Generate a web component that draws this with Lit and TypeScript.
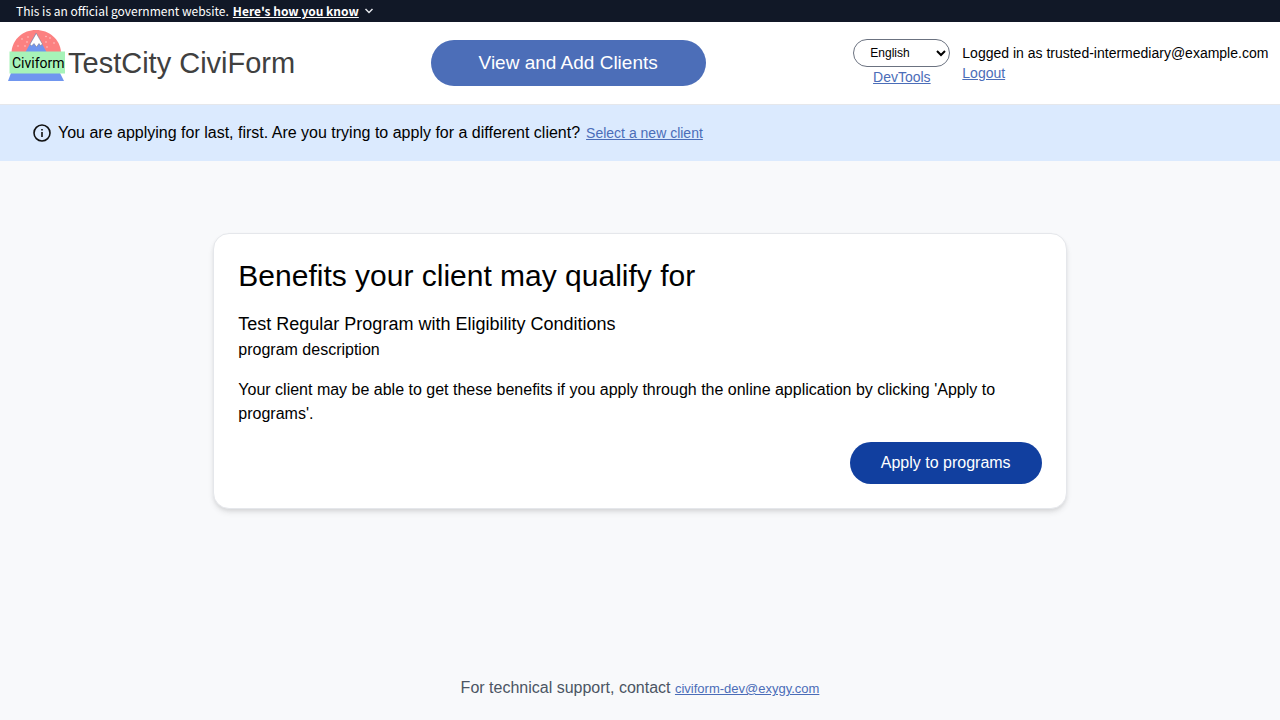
import { LitElement, html, css } from "lit";
import { customElement } from "lit/decorators.js";

@customElement("civiform-logo")
class CiviformLogo extends LitElement {
  static styles = css`
    :host {
      display: block;
      width: 60px;
      height: 52px;
      flex: none;
    }
    svg {
      display: block;
    }
    .word {
      font-family: Roboto, "Liberation Sans", sans-serif;
      font-size: 14px;
    }
  `;

  render() {
    return html`
      <svg width="60" height="52" viewBox="0 0 60 52" role="img" aria-label="Civiform logo">
        <path d="M3.500 22C4.500 9 15 0 28 0S52 9 53 22Z" fill="#fc8181" />
        <path d="M17.500 22L28 3L38.500 22Z" fill="#7096ef" />
        <path d="M28.300 3.300L34.300 13.800L32.800 16L31 13.500L28.500 17L26 13.500L23.500 16L22 14.200Z" fill="#fff" stroke="#77717c" stroke-width=".5" />
        <g fill="#fed7d7">
          <circle cx="20" cy="7" r=".7" /><circle cx="14" cy="9" r=".7" />
          <circle cx="19" cy="12" r=".7" /><circle cx="10" cy="16" r=".7" />
          <circle cx="17" cy="16" r=".7" /><circle cx="38" cy="6.500" r=".7" />
          <circle cx="42" cy="8" r=".7" /><circle cx="38" cy="12" r=".7" />
          <circle cx="46" cy="13" r=".7" /><circle cx="39" cy="17" r=".7" />
        </g>
        <path d="M3 43H52L56 51H0Z" fill="#7096ef" />
        <rect x="1.500" y="21.500" width="55.500" height="22" fill="#a7f3b8" />
        <text class="word" x="4" y="38">Civiform</text>
      </svg>
    `;
  }
}

@customElement("app-root")
class AppRoot extends LitElement {
  static styles = css`
    :host {
      display: flex;
      flex-direction: column;
      min-height: 100vh;
      background: #f8f9fb;
      color: #000;
      font-family: "Liberation Sans", Arial, sans-serif;
      font-size: 16px;
      line-height: 24px;
    }
    * {
      box-sizing: border-box;
    }
    h1,
    h2,
    p {
      margin: 0;
      font-weight: 400;
    }
    button {
      border: 0;
      border-radius: 24px;
      color: #fff;
      font-family: inherit;
      cursor: pointer;
    }
    a {
      color: #4b6db8;
      font-size: 14px;
    }
    .gov {
      display: flex;
      align-items: center;
      gap: 4px;
      height: 22px;
      padding: 0 16px;
      background: #111827;
      color: #fff;
      font-family: "Noto Sans CJK JP", sans-serif;
      font-size: 12px;
      line-height: 16px;
    }
    .know {
      display: flex;
      align-items: center;
      gap: 5px;
      padding: 0;
      background: none;
      border-radius: 0;
      font-size: 12px;
      line-height: 16px;
      font-weight: 700;
    }
    .know span {
      text-decoration: underline;
    }
    .top {
      display: grid;
      grid-template-columns: repeat(3, minmax(0, 1fr));
      height: 83px;
      padding-top: 8px;
      background: #fff;
      border-bottom: 1px solid #e5e7eb;
    }
    .third {
      display: flex;
      align-items: flex-start;
    }
    .brand {
      padding-left: 8px;
      font-size: 29px;
      line-height: 66px;
      color: #404040;
      white-space: nowrap;
    }
    .mid {
      padding: 10px 4px;
    }
    .clients {
      width: 275px;
      height: 46px;
      background: #4c6eb8;
      font-size: 19px;
    }
    .account {
      gap: 12px;
      padding-top: 9px;
      font-size: 14px;
      line-height: 20px;
      white-space: nowrap;
    }
    .lang {
      display: flex;
      flex-direction: column;
      align-items: center;
    }
    select {
      width: 97px;
      height: 28px;
      padding: 0 0 0 12px;
      border: 1px solid #6b7280;
      border-radius: 14px;
      background: #fff;
      color: #000;
      font-family: inherit;
      font-size: 12px;
    }
    .who {
      display: flex;
      flex-direction: column;
      align-items: flex-start;
      padding-top: 4px;
    }
    .notice {
      display: flex;
      align-items: center;
      gap: 6px;
      padding: 16px 32px;
      background: #dbeafe;
    }
    main {
      flex: 1;
      padding: 72px 0;
    }
    .card {
      width: 66.67%;
      margin: 0 auto;
      padding: 24px;
      background: #fff;
      border: 1px solid #e5e7eb;
      border-radius: 16px;
      box-shadow: 0 4px 6px -1px rgb(0 0 0 / 0.1), 0 2px 4px -1px rgb(0 0 0 / 0.08);
    }
    h1 {
      font-size: 30px;
      line-height: 36px;
      margin-bottom: 16px;
    }
    h2 {
      font-size: 18px;
      line-height: 28px;
    }
    .explain {
      margin: 16px 0;
    }
    .actions {
      display: flex;
      justify-content: flex-end;
    }
    .apply {
      width: 192px;
      height: 42px;
      background: #113f9f;
      font-size: 16px;
    }
    footer {
      padding: 19px 0;
      text-align: center;
      color: #4b5563;
    }
    footer a {
      font-size: 13px;
    }
  `;

  render() {
    return html`
      <div class="gov">
        <span>This is an official government website.</span>
        <button class="know" type="button">
          <span>Here's how you know</span>
          <svg width="10" height="6" viewBox="0 0 10 6" fill="none" stroke="#e5e7eb" stroke-width="1.500" aria-hidden="true">
            <path d="M1.500 1L5 4.500L8.500 1" />
          </svg>
        </button>
      </div>
      <header class="top">
        <div class="third brand">
          <civiform-logo></civiform-logo>
          <span>TestCity CiviForm</span>
        </div>
        <div class="third mid">
          <button class="clients" type="button">View and Add Clients</button>
        </div>
        <div class="third account">
          <div class="lang">
            <select aria-label="Language">
              <option>English</option>
            </select>
            <a href="#devtools">DevTools</a>
          </div>
          <div class="who">
            <span>Logged in as trusted-intermediary@example.com</span>
            <a href="#logout">Logout</a>
          </div>
        </div>
      </header>
      <div class="notice">
        <svg width="20" height="20" viewBox="0 0 20 20" aria-hidden="true">
          <circle cx="10" cy="10" r="8" fill="none" stroke="#111" stroke-width="1.600" />
          <path d="M9.200 9H10.800V14H9.200ZM9.200 6H10.800V7.600H9.200Z" fill="#111" />
        </svg>
        <span>You are applying for last, first. Are you trying to apply for a different client?</span>
        <a href="#clients">Select a new client</a>
      </div>
      <main>
        <section class="card">
          <h1>Benefits your client may qualify for</h1>
          <h2>Test Regular Program with Eligibility Conditions</h2>
          <p>program description</p>
          <p class="explain">
            Your client may be able to get these benefits if you apply through the online application by clicking 'Apply to
            programs'.
          </p>
          <div class="actions">
            <button class="apply" type="button">Apply to programs</button>
          </div>
        </section>
      </main>
      <footer>
        For technical support, contact
        <a href="mailto:civiform-dev@exygy.com">civiform-dev@exygy.com</a>
      </footer>
    `;
  }
}
